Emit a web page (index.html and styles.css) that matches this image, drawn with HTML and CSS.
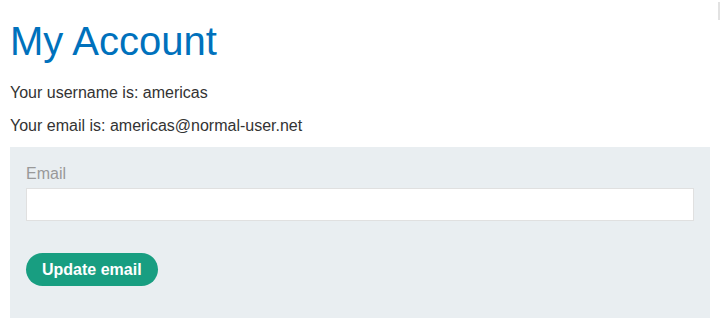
FILE: index.html
```html
<!DOCTYPE html>
<html lang="en">
<head>
<meta charset="utf-8">
<title>My Account</title>
<link rel="stylesheet" href="styles.css">
</head>
<body>
<div class="edge-mark"></div>
<main class="page">
  <h1 class="title">My Account</h1>
  <p class="info">Your username is: americas</p>
  <p class="info info-last">Your email is: americas@normal-user.net</p>
  <form class="panel">
    <label class="field-label" for="email">Email</label>
    <input class="field-input" id="email" type="email" name="email">
    <button class="btn" type="button">Update email</button>
  </form>
</main>
</body>
</html>
```

FILE: styles.css
```css
html, body {
  margin: 0;
  padding: 0;
  background: #ffffff;
}

body {
  font-family: "Liberation Sans", Arial, sans-serif;
  color: #333333;
  font-size: 16px;
}

.edge-mark {
  position: absolute;
  top: 2px;
  right: 0;
  width: 2px;
  height: 18px;
  background: #e2e2e2;
}

.page {
  padding: 18px 10px 0 10px;
  display: flex;
  flex-direction: column;
}

.title {
  margin: 0 0 20px 0;
  font-size: 40px;
  font-weight: normal;
  line-height: 46px;
  color: #0071bc;
}

.info {
  margin: 0 0 15px 0;
  line-height: 18px;
}

.info-last {
  margin-bottom: 12px;
}

.panel {
  background: #e9eef1;
  padding: 18px 16px 32px 16px;
  display: flex;
  flex-direction: column;
  align-items: flex-start;
}

.field-label {
  color: #999999;
  line-height: 18px;
  margin-bottom: 5px;
}

.field-input {
  box-sizing: border-box;
  width: 100%;
  height: 33px;
  margin: 0 0 32px 0;
  border: 1px solid #e0e0e0;
  background: #ffffff;
  padding: 0 8px;
  font-family: inherit;
  font-size: 16px;
  outline: none;
}

.btn {
  height: 33px;
  padding: 0 16px;
  border: none;
  border-radius: 25px;
  background: #189e81;
  color: #ffffff;
  font-family: "Liberation Sans", Arial, sans-serif;
  font-weight: bold;
  font-size: 16px;
  line-height: 33px;
  cursor: pointer;
}
```
